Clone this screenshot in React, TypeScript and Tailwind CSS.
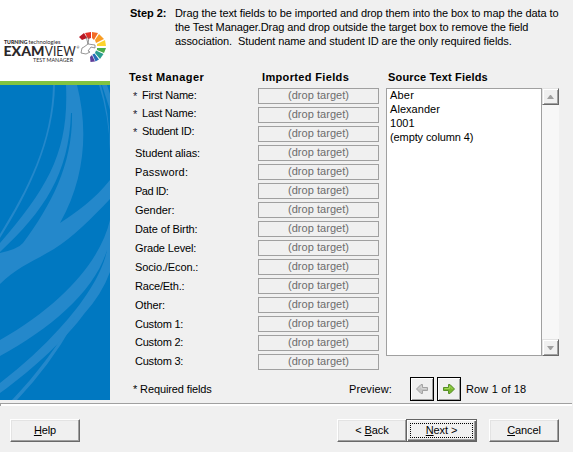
import type { ReactNode } from "react";

const required = [
  { label: "First Name:", spacing: "-tracking-[0.2px]" },
  { label: "Last Name:", spacing: "-tracking-[0.2px]" },
  { label: "Student ID:", spacing: "-tracking-[0.25px]" },
];
const optional = [
  { label: "Student alias:", spacing: "h-[19px] -tracking-[0.12px]" },
  { label: "Password:", spacing: "h-[19px] tracking-[0.2px]" },
  { label: "Pad ID:", spacing: "h-[19px] -tracking-[0.5px]" },
  { label: "Gender:", spacing: "h-[19px] -tracking-[0.05px]" },
  { label: "Date of Birth:", spacing: "h-[19px] -tracking-[0.12px]" },
  { label: "Grade Level:", spacing: "h-[19px] -tracking-[0.15px]" },
  { label: "Socio./Econ.:", spacing: "h-[19px] -tracking-[0.12px]" },
  { label: "Race/Eth.:", spacing: "h-[19px] -tracking-[0.2px]" },
  { label: "Other:", spacing: "h-[19px] -tracking-[0.1px]" },
  { label: "Custom 1:", spacing: "h-[18px] -tracking-[0.22px]" },
  { label: "Custom 2:", spacing: "h-[19px] -tracking-[0.22px]" },
  { label: "Custom 3:", spacing: "h-[19px] -tracking-[0.22px]" },
];
const source = [
  { text: "Aber", spacing: "tracking-[0.2px]" },
  { text: "Alexander", spacing: "tracking-[0.05px]" },
  { text: "1001", spacing: "tracking-[0.05px]" },
  { text: "(empty column 4)", spacing: "-tracking-[0.1px]" },
];

function Logo() {
  return (
    <svg className="block h-[81px] w-[110px]" viewBox="0 0 110 81" fontFamily="Lato, sans-serif" fill="#2b2729">
      <text x="4" y="43.700" fontSize="4.600" fontWeight="900" textLength="23.500" lengthAdjust="spacingAndGlyphs">TURNING</text>
      <text x="28.500" y="43.700" fontSize="5" textLength="32" lengthAdjust="spacingAndGlyphs">technologies</text>
      <text x="3.500" y="55.500" fontSize="13.500" fontWeight="900" textLength="41" lengthAdjust="spacingAndGlyphs">EXAM</text>
      <text x="44.800" y="55.500" fontSize="13.500" textLength="31" lengthAdjust="spacingAndGlyphs">VIEW</text>
      <text x="76.500" y="49" fontSize="3.500">®</text>
      <text x="33" y="61.800" fontSize="5.800" textLength="40" lengthAdjust="spacingAndGlyphs">TEST MANAGER</text>
      <path d="M79 37L84 33L87 38L82 40Z" fill="#b91824" />
      <path d="M85 33L91 32L91 38L88 39Z" fill="#e42e25" />
      <path d="M92 32L98 33L94 40L92 38Z" fill="#f26b25" />
      <path d="M99 34L104 39L96 43L95 40Z" fill="#f99d24" />
      <path d="M105 40L106 46L97 46L97 44Z" fill="#fed42e" />
      <path d="M97 48L106 48L104 53L97 50Z" fill="#4cad49" />
      <path d="M96 50.500L103.500 54L100 59L95 53Z" fill="#2a9d8f" />
      <path d="M94.500 53.500L99 59.500L95.500 61.500L92.500 54.500Z" fill="#246eb9" />
      <path d="M92 55L95 61.500L90.500 62L90 57Z" fill="#5d3d99" />
      <g fill="none" stroke="#6a6a6a" strokeWidth=".7" strokeLinejoin="round">
        <path d="M86 36L88 44L84 47L82 48L81 53L86 54L90 52L88 51L91 47L95 48L95 45L88 44M88 44L89 37" />
      </g>
    </svg>
  );
}

function Waves() {
  return (
    <svg className="block h-[315px] w-[110px]" viewBox="0 0 110 315" fill="#2488cb">
      <path d="M53 0C52 58 27 105 0 149V153C29 107 54 55 55 0Z" />
      <path d="M66 0C69 67 48 102 0 158V167C44 126 69 89 71 28H72C73 78 52 119 23 158Q18 164 0 168V199C17 182 36 175 54 164C73 152 91 134 110 114V95C95 114 77 127 60 138C86 92 88 43 77 0Z" />
      <path d="M99 0Q109 31 110 66V58Q109 28 101 0Z" />
      <path d="M102 0L110 25V9L107 0Z" />
      <path d="M110 135C101 174 65 218 0 255V271C50 244 95 206 107 165C103 187 85 216 60 243Q35 271 0 298V308C34 284 69 250 84 229Q102 209 110 187Z" />
      <path d="M75 231C60 258 36 290 12 315H17Q50 280 72 241Z" />
    </svg>
  );
}

function Arrow({ active = false }: { active?: boolean }) {
  return (
    <svg viewBox="0 0 14 12" className={active ? "h-3 w-3.5" : "h-3 w-3.5 -scale-x-100"}>
      <path d="M1.500 4.500H6.500V1.500H8L12.500 6L8 10.500H6.500V7.500H1.500Z" fill={active ? "#79b82f" : "#c4c4c4"} stroke={active ? "#568e27" : "#a3a3a3"} strokeLinejoin="round" />
      <path d="M2.500 5.500H7.500V3L10.500 6" fill="none" stroke={active ? "#a2d756" : "#d5d5d5"} />
    </svg>
  );
}

function Button({ children, className = "" }: { children: ReactNode; className?: string }) {
  return (
    <button className={`${className} h-[23px] w-[70px] border border-t-white border-l-white border-r-[#696969] border-b-[#696969] bg-[#f0f0f0] pb-px leading-[14px] -tracking-[0.1px] shadow-[inset_-1px_-1px_0_#a0a0a0,inset_1px_1px_0_#e3e3e3]`}>
      {children}
    </button>
  );
}

function StepButton({ active = false }: { active?: boolean }) {
  return (
    <button className="flex h-6 w-6 items-center justify-center border border-black bg-[#f0f0f0] shadow-[inset_1px_1px_0_#fff,inset_-1px_-1px_0_#a0a0a0]">
      <Arrow active={active} />
    </button>
  );
}

function ScrollButton({ down = false }: { down?: boolean }) {
  return (
    <div className="flex h-[17px] w-[17px] items-center justify-center border border-t-[#e3e3e3] border-l-[#e3e3e3] border-r-[#696969] border-b-[#696969] bg-[#f0f0f0] shadow-[inset_1px_1px_0_#fff,inset_-1px_-1px_0_#a0a0a0]">
      <svg viewBox="0 0 7 4" className={down ? "h-1 w-[7px] rotate-180" : "h-1 w-[7px]"} fill="#a0a0a0"><path d="M3 0H4L7 4H0Z" /></svg>
    </div>
  );
}

export default function App() {
  return (
    <div className="flex h-[452px] w-[573px] flex-col overflow-hidden bg-[#f0f0f0] font-['Liberation_Sans',Arial,sans-serif] text-[11px] leading-[14px] whitespace-pre text-black">
      <div className="flex h-[403px]">
        <aside className="h-[400px] w-[110px] bg-[#0078c1]">
          <div className="h-[81px] bg-white"><Logo /></div>
          <div className="h-1 bg-[#82c341]" />
          <Waves />
        </aside>
        <main className="flex flex-col pt-[6px] pl-[19px]">
          <div className="flex h-[64px]">
            <b className="w-[46px] pl-px -tracking-[0.05px]">Step 2:</b>
            <div className="-tracking-[0.09px]">
              <p>Drag the text fields to be imported and drop them into the box to map the data to</p>
              <p>the Test Manager.Drag and drop outside the target box to remove the field</p>
              <p>association.  Student name and student ID are the only required fields.</p>
            </div>
          </div>
          <div className="flex h-[18px] font-bold">
            <h2 className="w-[133px] tracking-[0.42px]">Test Manager</h2>
            <h2 className="w-[126px] tracking-[0.35px]">Imported Fields</h2>
            <h2 className="tracking-[0.16px]">Source Text Fields</h2>
          </div>
          <div className="flex h-[289px]">
            <div className="w-[129px] pl-1">
              <ul className="h-[58px]">
                {required.map(({ label, spacing }) => (
                  <li key={label} className="flex h-[18px]">
                    <span className="w-[9px] pt-px text-[#222233]">*</span>
                    <span className={spacing}>{label}</span>
                  </li>
                ))}
              </ul>
              <ul className="pl-[2px]">
                {optional.map(({ label, spacing }) => <li key={label} className={spacing}>{label}</li>)}
              </ul>
            </div>
            <div className="flex w-[121px] flex-col gap-[3px]">
              {[...required, ...optional].map(({ label }) => (
                <div key={label} className="h-4 border border-[#a0a0a0] text-center leading-[13px] tracking-[0.04px] text-[#6d6d6d]">(drop target)</div>
              ))}
            </div>
            <div className="ml-[7px] flex h-[268px]">
              <div className="w-[156px] border border-[#a0a0a0] bg-white pl-[3px]">
                <div className="-mt-px">
                  {source.map(({ text, spacing }) => <div key={text} className={spacing}>{text}</div>)}
                </div>
              </div>
              <div className="flex flex-col justify-between bg-[#f7f7f7]"><ScrollButton /><ScrollButton down /></div>
            </div>
          </div>
          <div className="flex h-6 items-center">
            <span className="w-[216px] pl-1 -tracking-[0.12px]">* Required fields</span>
            <span className="w-[65px] pl-1 tracking-[0.08px]">Preview:</span>
            <div className="flex gap-[3px]"><StepButton /><StepButton active /></div>
            <span className="ml-[5px] tracking-[0.15px]">Row 1 of 18</span>
          </div>
        </main>
      </div>
      <div className="mr-px h-[3px] border-t border-l border-[#a0a0a0] bg-white" />
      <footer className="flex pt-[13px] pl-[10px]">
        <Button><u>H</u>elp</Button>
        <Button className="ml-[257px]">{"< "}<u>B</u>ack</Button>
        <button className="-ml-px h-[23px] w-[71px] border border-[#646464] bg-[#f0f0f0] p-[3px] shadow-[inset_1px_1px_0_#fff,inset_-1px_-1px_0_#696969,inset_-2px_-2px_0_#a0a0a0]">
          <span className="flex h-[15px] items-center justify-center border border-dotted border-black pb-px -tracking-[0.1px]"><u>N</u>ext &gt;</span>
        </button>
        <Button className="ml-3"><u>C</u>ancel</Button>
      </footer>
    </div>
  );
}
